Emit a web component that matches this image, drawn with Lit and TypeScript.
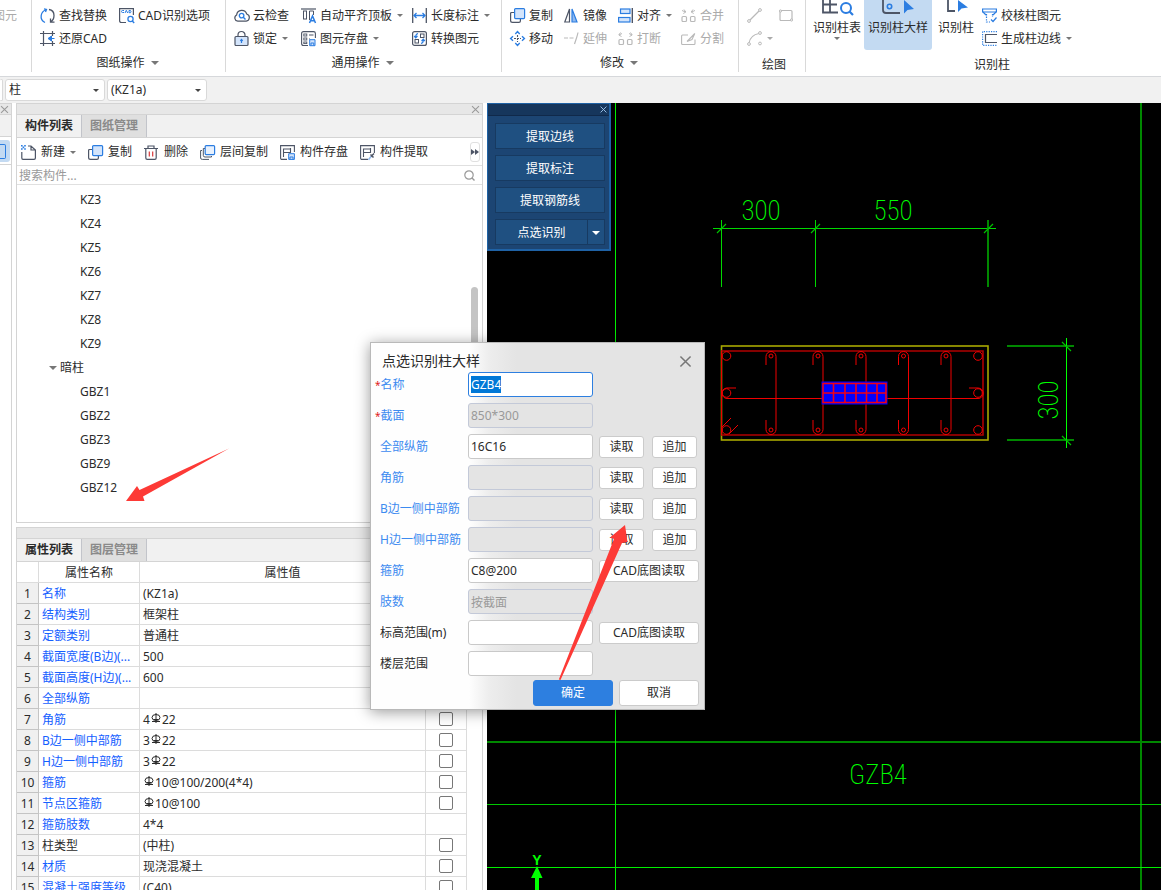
import { LitElement, html, svg, css, nothing, TemplateResult } from "lit";
import { customElement, state } from "lit/decorators.js";
import { classMap } from "lit/directives/class-map.js";

const D = "#4d5566"; // dark icon stroke
const B = "#2b7de1"; // accent stroke
const G = "#b9b9b9"; // disabled stroke
const L = "#d3e4fb"; // accent fill

const shapes: Record<string, TemplateResult> = {
  find: svg`<path d="M5 14.5C2 13 .8 10 1.2 7.500C1.600 5 3 3 5.500 2M4 .8L6.500 1.500L5.500 4" fill="none" stroke=${B} stroke-width="1.300"/><path d="M9 1.500C12 2 14 4.500 14 7.500C14 10 13 12.500 10.500 13.800M10.500 10.500V14.200H14.500" fill="none" stroke=${D} stroke-width="1.300"/>`,
  cadopt: svg`<path d="M7 14.500H2.500Q.6 14.500 .6 12.500V.6H14.400V7" fill="none" stroke=${D} stroke-width="1.200"/><path d="M5 2.500H3.500Q2.500 2.500 2.500 3.500T3.500 4.500H5M6 5L7.300 2.300L8.700 5M10 2.500V4.700H11.500Q12.500 3.600 11.500 2.500Z" fill="none" stroke=${B} stroke-width="1"/><circle cx="11.500" cy="11" r="2.600" fill="none" stroke=${B} stroke-width="1.300"/><path d="M13.300 13L15.200 15" stroke=${B} stroke-width="1.400"/>`,
  restore: svg`<path d="M3.500 0V15M0 2.500H15M0 12.500H15M12.500 0V5M12.500 10V15" fill="none" stroke=${D} stroke-width="1.200"/><path d="M14.500 7.500H9M11.500 5L8 7.500L11.500 10Z" fill=${B} stroke=${B} stroke-width="1"/>`,
  cloud: svg`<path d="M3.800 13.200A3.300 3.300 0 0 1 2.600 7A5.200 5.200 0 0 1 12.700 6A3.700 3.700 0 0 1 12.200 13.200Z" fill="none" stroke=${D} stroke-width="1.200"/><circle cx="7.600" cy="7.600" r="2.300" fill="none" stroke=${B} stroke-width="1.300"/><path d="M9.300 9.300L11.500 11.500" stroke=${B} stroke-width="1.400"/>`,
  lock: svg`<path d="M4 5.500V4A3.500 3.500 0 0 1 11 4V5.500" fill="none" stroke=${D} stroke-width="1.200"/><rect x="1" y="5.500" width="13" height="9" rx="1" fill=${L} stroke=${D} stroke-width="1.200"/><path d="M7.500 12V9.500M6.300 9.800L7.500 8.500L8.700 9.800" fill=${B} stroke=${B} stroke-width="1.200"/>`,
  aligntop: svg`<path d="M0 1H15" stroke=${D} stroke-width="1.200"/><rect x="2.500" y="3" width="3" height="8" fill="none" stroke=${D}/><path d="M8.500 12V3H12.500V7" fill="none" stroke=${D}/><path d="M8.500 15L11.500 8L14.500 15M9.500 12.700H13.500" fill="none" stroke=${B} stroke-width="1.500"/>`,
  save2: svg`<path d="M7 14.500H2.500Q.6 14.500 .6 12.500V2.500Q.6 .6 2.500 .6H12.500Q14.400 .6 14.400 2.500V7M8 4H12.500M8 8H9" fill="none" stroke=${D} stroke-width="1.100"/><rect x="2.800" y="3" width="3" height="2" fill="none" stroke=${D} stroke-width=".9"/><rect x="2.800" y="7" width="3" height="2" fill="none" stroke=${D} stroke-width=".9"/><rect x="2.800" y="11" width="3" height="1.600" fill="none" stroke=${D} stroke-width=".9"/><path d="M8.700 8.700H14V14.700H8.700ZM10 14.500V12H12.800V14.500" fill=${L} stroke=${B} stroke-width="1"/>`,
  length: svg`<path d="M.7 0V15M14.300 0V15" stroke=${D} stroke-width="1.300"/><path d="M2 7.500H13M4.500 5L2 7.500L4.500 10M10.500 5L13 7.500L10.500 10" fill="none" stroke=${B} stroke-width="1.300"/>`,
  convert: svg`<rect x=".6" y=".6" width="13.800" height="13.800" rx="2" fill="none" stroke=${D} stroke-width="1.200"/><rect x="8.500" y="3" width="3.500" height="3.500" fill="none" stroke=${D}/><rect x="3" y="8.500" width="3.500" height="3.500" fill="none" stroke=${D}/><path d="M6 2.500Q3.500 3 3.700 6.500M2.200 5L3.700 6.800L5.500 5M9 12.500Q11.500 12 11.300 8.500M9.500 10L11.300 8.200L12.800 10" fill="none" stroke=${B} stroke-width="1.200"/>`,
  copy: svg`<path d="M4 4.500H1.600Q.6 4.500 .6 5.500V12.500Q.6 14.400 2.500 14.400H9Q10.400 14.400 10.400 13V11" fill="none" stroke=${D} stroke-width="1.200"/><rect x="4.600" y=".6" width="10" height="10" rx="1" fill=${L} stroke=${B} stroke-width="1.200"/>`,
  mirror: svg`<path d="M5.500 1V14H.8Z" fill="none" stroke=${D} stroke-width="1.200"/><path d="M8 1L13 14H8Z" fill="#8fb9ef" stroke=${B} stroke-width="1.200"/>`,
  align: svg`<path d="M14.300 0V15" stroke=${D} stroke-width="1.400"/><rect x="2.500" y="1" width="9.500" height="4.500" fill=${L} stroke=${B} stroke-width="1.200"/><rect x=".6" y="9.500" width="11.400" height="4.500" fill=${L} stroke=${B} stroke-width="1.200"/>`,
  merge: svg`<path d="M1 2.500L4.500 4M3 1.500L4.800 4L2.300 5.500M14 2.500L10.500 4M12 1.500L10.200 4L12.700 5.500" fill="none" stroke=${G}/><rect x="1" y="8.500" width="4.500" height="5" rx="1" fill="none" stroke=${G} stroke-width="1.200"/><rect x="9.500" y="8.500" width="4.500" height="5" rx="1" fill="none" stroke=${G} stroke-width="1.200"/>`,
  move: svg`<path d="M7.500 4V11M4 7.500H11" stroke=${D} stroke-width="1.100" stroke-dasharray="2 1"/><path d="M5.300 3L7.500 .6L9.700 3M5.300 12L7.500 14.400L9.700 12M3 5.300L.6 7.500L3 9.700M12 5.300L14.400 7.500L12 9.700" fill="none" stroke=${B} stroke-width="1.400"/>`,
  extend: svg`<path d="M0 7H4M5.500 7H9.500M14 1.500Q13.500 4 12.500 7T10.500 13" fill="none" stroke=${G} stroke-width="1.200"/>`,
  brk: svg`<path d="M1 4L4 2.500M2.500 1.500L.8 4L3.500 5.500M14 4L11 2.500M12.500 1.500L14.200 4L11.500 5.500" fill="none" stroke=${G}/><rect x="1" y="8.500" width="4.500" height="5" rx="1" fill="none" stroke=${G} stroke-width="1.200"/><rect x="9.500" y="8.500" width="4.500" height="5" rx="1" fill="none" stroke=${G} stroke-width="1.200"/>`,
  split: svg`<path d="M7 4H1.500Q.6 4 .6 5V12.500Q.6 13.500 1.500 13.500H13Q14 13.500 14 12.500V8.500M6 10.500L13.800 2.500L11 8.500L6 10.500" fill="none" stroke=${G} stroke-width="1.100"/>`,
  line: svg`<circle cx="2" cy="13" r="1.400" fill="none" stroke=${G}/><circle cx="13" cy="2" r="1.400" fill="none" stroke=${G}/><path d="M3 12L12 3" stroke=${G} stroke-width="1.200"/>`,
  rect: svg`<rect x="2" y="2.500" width="12" height="10" rx="1" fill="none" stroke=${G} stroke-width="1.200"/><circle cx="2.500" cy="3" r="1.100" fill="#fff" stroke=${G}/><circle cx="13.500" cy="12" r="1.100" fill="#fff" stroke=${G}/>`,
  arc: svg`<path d="M2 12Q3.500 4 12 2.500" fill="none" stroke=${G} stroke-width="1.200"/><circle cx="2" cy="13" r="1.400" fill="#fff" stroke=${G}/><circle cx="13" cy="2" r="1.400" fill="#fff" stroke=${G}/><circle cx="13" cy="12.500" r="1.400" fill="#fff" stroke=${G}/>`,
  check: svg`<path d="M.6 1H14.400V4H.6Z" fill="none" stroke=${B} stroke-width="1.200"/><path d="M4.500 6V14H8M10.500 6V9" fill="none" stroke=${B} stroke-width="1.200" stroke-dasharray="1.400 1.200"/><path d="M1 4L4 7M14 4L11 7M9 11.500L11 13.500L14.500 9.500" fill="none" stroke=${B} stroke-width="1.200"/>`,
  border: svg`<path d="M15 .6H.6V14.400H15" fill="none" stroke=${B} stroke-width="1.200" stroke-dasharray="1.200 1.200"/><path d="M15 3.500H3.500V11.500H15" fill="none" stroke=${D} stroke-width="1.200"/>`,
  create: svg`<path d="M7 1H10L14.400 5V13Q14.400 14.400 13 14.400H2Q.8 14.400 .8 13V7M10 1V5H14.400" fill="none" stroke=${D} stroke-width="1.200"/><path d="M0 0H1.600V1.600H0ZM3.200 0H4.800V1.600H3.200ZM1.600 1.600H3.200V3.200H1.600ZM0 3.200H1.600V4.800H0ZM3.200 3.200H4.800V4.800H3.200Z" fill=${B}/>`,
  trash: svg`<path d="M0 3.500H14M4 3V1H10V3M1.800 4V13Q1.800 14.400 3.200 14.400H10.800Q12.200 14.400 12.200 13V4" fill="none" stroke=${D} stroke-width="1.200"/><path d="M5.300 6.500V11.500M8.700 6.500V11.500" stroke="#d8383a" stroke-width="1.200"/>`,
  floors: svg`<path d="M2 5.500H.6V13Q.6 14.400 2.500 14.400H9" fill="none" stroke=${D} stroke-width="1"/><path d="M5 3.500H3.300V10.500Q3.300 12 5 12H11.500V11" fill="none" stroke=${D} stroke-width="1"/><rect x="5.200" y=".6" width="9.400" height="9" rx="1" fill="#e8f1fd" stroke=${B} stroke-width="1.200"/>`,
  store: svg`<path d="M7 14.400H2Q.6 14.400 .6 13V.6H14.400V7M3.500 12V4H10.500M3.500 7.500H10.500V3" fill="none" stroke=${D} stroke-width="1.100"/><path d="M8.700 8.700H14.400V14.400H8.700ZM10 14.500V12H13V14.500" fill=${L} stroke=${B} stroke-width="1"/>`,
  extract: svg`<path d="M8 14.400H2Q.6 14.400 .6 13V.6H14.400V8M3.500 12V4H10.500M3.500 7.500H10.500V3" fill="none" stroke=${D} stroke-width="1.100"/><path d="M8.500 14.800L11 11.500" stroke="#8fb9ef" stroke-width="1.500"/><path d="M11 11.500L14 8.500M10.500 9.500L13.500 12.500" stroke=${D} stroke-width="1.500"/>`,
  cross: svg`<path d="M3.500 3.500L11.500 11.500M11.500 3.500L3.500 11.500" fill="none" stroke="currentColor" stroke-width="1.200"/>`,
  search: svg`<circle cx="7" cy="7" r="4.200" fill="none" stroke="#999" stroke-width="1.200"/><path d="M10 10L12.500 12.500" stroke="#999" stroke-width="1.400"/>`,
};

const icon = (name: string) =>
  html`<svg class="icon" width="15" height="15" viewBox="0 0 15 15" aria-hidden="true">${shapes[name]}</svg>`;
const caret = html`<span class="caret"></span>`;

interface Tool { icon: string; text?: string; menu?: boolean; off?: boolean; label?: string }

const drawingTools: Tool[] = [
  { icon: "find", text: "查找替换" },
  { icon: "cadopt", text: "CAD识别选项" },
  { icon: "restore", text: "还原CAD" },
];
const commonTools: Tool[] = [
  { icon: "cloud", text: "云检查" },
  { icon: "aligntop", text: "自动平齐顶板", menu: true },
  { icon: "length", text: "长度标注", menu: true },
  { icon: "lock", text: "锁定", menu: true },
  { icon: "save2", text: "图元存盘", menu: true },
  { icon: "convert", text: "转换图元" },
];
const modifyTools: Tool[] = [
  { icon: "copy", text: "复制" },
  { icon: "mirror", text: "镜像" },
  { icon: "align", text: "对齐", menu: true },
  { icon: "merge", text: "合并", off: true },
  { icon: "move", text: "移动" },
  { icon: "extend", text: "延伸", off: true },
  { icon: "brk", text: "打断", off: true },
  { icon: "split", text: "分割", off: true },
];
const drawTools: Tool[] = [
  { icon: "line", off: true, label: "直线" },
  { icon: "rect", off: true, label: "矩形" },
  { icon: "arc", off: true, menu: true, label: "弧" },
];
const listTools: Tool[] = [
  { icon: "create", text: "新建", menu: true },
  { icon: "copy", text: "复制" },
  { icon: "trash", text: "删除" },
  { icon: "floors", text: "层间复制" },
  { icon: "store", text: "构件存盘" },
  { icon: "extract", text: "构件提取" },
];

const properties: { name: string; value: string; plain?: boolean; tick?: boolean }[] = [
  { name: "名称", value: "(KZ1a)" },
  { name: "结构类别", value: "框架柱", tick: true },
  { name: "定额类别", value: "普通柱", tick: true },
  { name: "截面宽度(B边)(...", value: "500", tick: true },
  { name: "截面高度(H边)(...", value: "600", tick: true },
  { name: "全部纵筋", value: "", tick: true },
  { name: "角筋", value: "4#22", tick: true },
  { name: "B边一侧中部筋", value: "3#22", tick: true },
  { name: "H边一侧中部筋", value: "3#22", tick: true },
  { name: "箍筋", value: "#10@100/200(4*4)", tick: true },
  { name: "节点区箍筋", value: "#10@100", tick: true },
  { name: "箍筋肢数", value: "4*4" },
  { name: "柱类型", value: "(中柱)", plain: true, tick: true },
  { name: "材质", value: "现浇混凝土", tick: true },
  { name: "混凝土强度等级", value: "(C40)", tick: true },
];

const fields: { id: string; label: string; value?: string; need?: boolean; off?: boolean; plain?: boolean; act?: "pair" | "cad" }[] = [
  { id: "name", label: "名称", value: "GZB4", need: true },
  { id: "section", label: "截面", value: "850*300", need: true, off: true },
  { id: "all", label: "全部纵筋", value: "16C16", act: "pair" },
  { id: "corner", label: "角筋", off: true, act: "pair" },
  { id: "bside", label: "B边一侧中部筋", off: true, act: "pair" },
  { id: "hside", label: "H边一侧中部筋", off: true, act: "pair" },
  { id: "stirrup", label: "箍筋", value: "C8@200", act: "cad" },
  { id: "legs", label: "肢数", value: "按截面", off: true },
  { id: "level", label: "标高范围(m)", plain: true, act: "cad" },
  { id: "floor", label: "楼层范围", plain: true },
];

/** The model-space view: axis lines, the column section and its dimensions. */
@customElement("cad-view")
export class CadView extends LitElement {
  static styles = css`
    :host { display: block; background: #000; overflow: hidden; }
    .view { display: block; width: 100%; height: 100%; }
    .dim { font: 200 27px "Roboto Condensed", "Liberation Sans Narrow", "Liberation Sans", sans-serif; fill: #0f0; }
    .axis { font: 700 14px "Liberation Sans Narrow", "Liberation Sans", sans-serif; fill: #0f0; }
  `;

  private tie(x: number) {
    return svg`
      <path d="M${x - 10} 365V356.500A5 5 0 0 1 ${x} 356.500V429.500A5 5 0 0 1 ${x - 10} 429.500V420" />
      <circle cx=${x - 5} cy="356" r="2" /><circle cx=${x - 5} cy="430" r="2" />`;
  }

  render() {
    return html`<svg class="view" role="img" aria-label="GZB4">
      <g transform="translate(-487 -103)" fill="none">
        <path d="M487 742H3000M1141 103V2000" stroke="#008800" stroke-width="2" />
        <path d="M487 804.500H3000" stroke="#00c800" />
        <path d="M487 867.500H3000M615.500 103V2000" stroke="#00f000" />
        <path d="M713 228.500H996M721.500 220V287M815.500 220V287" stroke="#00d800" />
        <path d="M988 220V287M1007 346H1074M1007 440H1074" stroke="#008800" stroke-width="2" />
        <path d="M1066.500 338V448" stroke="#0f0" />
        <path d="M717 233L726 224M811 233L820 224M984 233L993 224M1062 342L1071 351M1062 436L1071 445" stroke="#00c000" stroke-width="1.200" />
        <text class="dim" x="761" y="220" text-anchor="middle">300</text>
        <text class="dim" x="893" y="220" text-anchor="middle">550</text>
        <text class="dim" transform="translate(1058 400) rotate(-90)" text-anchor="middle">300</text>
        <text class="dim" x="878" y="784" text-anchor="middle">GZB4</text>

        <rect x="721.500" y="346" width="266.500" height="94" stroke="#a8a800" stroke-width="1.600" />
        <path d="M721 351H983V435H721" stroke="#b00000" stroke-width="1.600" />
        <path d="M721.500 351V435M728 398.500H978" stroke="#f00000" />
        <g stroke="#f00000">
          ${[776, 823, 866, 908.5, 951].map((x) => this.tie(x))}
          ${[356, 393, 430].map((y) => svg`<circle cx="726.500" cy=${y} r="4.300" /><circle cx="978" cy=${y} r="4.300" />`)}
          <path d="M736 388H726.500A5 5 0 0 0 728 398.500M969 388H978A5 5 0 0 1 978 398.500M722 427L731 418M729 434L738 425" />
        </g>
        <rect x="821.500" y="381.500" width="66" height="23" fill="#00f" />
        <path d="M823 383.500H886V402.500H823ZM823 393H886M833.500 383V403M845 383V403M856 383V403M866.500 383V403M877 383V403" stroke="#f00014" stroke-width="1.600" />

        <text class="axis" x="537" y="865" text-anchor="middle">Y</text>
        <path d="M537 866L531 878H542.500ZM535 878H539V2000H535Z" fill="#0f0" />
      </g>
    </svg>`;
  }
}

@customElement("app-root")
export class AppRoot extends LitElement {
  @state() private values: Record<string, string> = Object.fromEntries(fields.map((f) => [f.id, f.value ?? ""]));

  static styles = css`
    :host {
      display: block; position: relative; height: 100vh; overflow: hidden;
      font: 12px/16px "Noto Sans", "Noto Sans CJK SC", sans-serif; color: #2b2b2b; background: #fff;
    }
    *, *::before { box-sizing: border-box; }
    button, input, select { font: inherit; color: inherit; margin: 0; padding: 0; border: 0; background: none; }
    button { display: inline-flex; align-items: center; white-space: nowrap; }
    .icon { flex: none; display: block; overflow: visible; }
    .caret { flex: none; width: 0; height: 0; border: 3px solid transparent; border-top-color: #777; border-bottom: 0; }
    .shell { display: flex; flex-direction: column; height: 100%; }

    .ribbon { display: flex; flex: none; height: 77px; padding-bottom: 4px; border-bottom: 1px solid #d6d8db; overflow: hidden; }
    .group { flex: none; display: flex; flex-direction: column; padding: 4px 0 0 8px; border-right: 1px solid #d9d9d9; }
    .group.drawing { width: 194px; }
    .group.common { width: 276px; }
    .group.modify { width: 237px; }
    .group.sketch { width: 67px; }
    .group.recognise { flex: 1 0 372px; padding: 0; border: 0; }
    .group.cut { width: 32px; padding: 4px 14px 0 0; align-items: flex-end; color: #aaa; }
    .tools { display: grid; grid-auto-rows: 23px; justify-content: start; }
    .drawing .tools { grid-template-columns: 79px auto; }
    .common .tools { grid-template-columns: 67px 111px auto; }
    .modify .tools { grid-template-columns: 54px 54px 63px auto; }
    .sketch .tools { grid-template-columns: 31px auto; }
    .tool { gap: 4px; }
    .tool .caret { margin-left: 1px; }
    .tool.off { color: #aaa; }
    .tool.off .caret { border-top-color: #aaa; }
    .caption { display: flex; align-items: center; justify-content: center; gap: 6px; height: 16px; margin: 5px 10px 0 0; }
    .caption .caret { border-width: 4px 4px 0; }
    .caption.low { margin: 7px 4px 0 0; }
    .recognise .caption.low { margin-right: 0; }
    .big-row { display: flex; height: 50px; padding-left: 4px; }
    .big { flex-direction: column; width: 54px; }
    .big.wide { width: 68px; background: #c3daf2; border-radius: 0 0 3px 3px; }
    .big .pic { display: block; height: 20px; }
    .big.narrow { width: 48px; }
    .big .caret { margin-top: 1px; }
    .side { display: flex; flex-direction: column; padding: 4px 0 0 2px; }
    .side .tool { height: 23px; }

    .options { flex: none; display: flex; gap: 2px; height: 26px; padding-top: 2px; background: #f1f1f1; }
    .combo { position: relative; display: flex; width: 100px; height: 22px; background: #fff; border: 1px solid #d9d9d9; border-radius: 3px; }
    .combo select { appearance: none; flex: 1; padding-left: 3px; outline: 0; }
    .combo .caret { position: absolute; right: 5px; top: 9px; pointer-events: none; border-top-color: #444; }
    .combo.stub { width: 3px; border-left: 0; }

    .main { flex: 1; min-height: 0; display: grid; grid-template-columns: 12px 467px 1fr; gap: 4px; }
    .rail { display: flex; flex-direction: column; border: 1px solid #d4d4d4; border-width: 1px 1px 0 0; }
    .rail .bar, .panel .bar { flex: none; height: 11px; display: flex; align-items: center; justify-content: flex-end; background: #e7e7e7; border-bottom: 1px solid #d4d4d4; color: #999; }
    .rail .bar .icon, .panel .bar .icon { width: 13px; height: 13px; }
    .rail .blank { height: 22px; background: #f1f1f1; border-bottom: 1px solid #d4d4d4; }
    .rail .holder { height: 28px; padding-top: 3px; border-bottom: 1px solid #d4d4d4; }
    .rail .mode { display: flex; align-items: center; width: 10px; height: 22px; background: #c3daf2; border-radius: 0 3px 3px 0; }
    .rail .mode::before { content: ""; width: 6px; height: 15px; border: 1px solid #2b7de1; border-left: 0; border-radius: 0 2px 2px 0; }

    .column { display: flex; flex-direction: column; gap: 4px; min-height: 0; }
    .panel { display: flex; flex-direction: column; border: 1px solid #d4d4d4; min-height: 0; }
    .panel.list { flex: 0 0 420px; }
    .panel.props { flex: 1; border-bottom: 0; overflow: hidden; }
    .tabs { flex: none; display: flex; height: 23px; background: #f1f1f1; border-bottom: 1px solid #d4d4d4; }
    .tab { width: 65px; justify-content: center; font-weight: 700; border-right: 1px solid #c2c4ca; }
    .tab.idle { background: #dfdfdf; color: #8a8a8a; }
    .actions { flex: none; display: flex; align-items: center; gap: 12px; height: 28px; padding: 1px 2px 0 4px; border-bottom: 1px solid #e0e0e0; }
    .actions .tool { gap: 5px; }
    .actions .tool .caret { margin-left: 0; }
    .actions .more { width: 10px; height: 20px; margin-left: auto; justify-content: center; border: 1px solid #e0e0e0; border-radius: 3px; }
    .more .next { flex: none; width: 0; height: 0; border: 3px solid transparent; border-left: 4px solid #4d5566; border-right: 0; }
    .find { flex: none; display: flex; align-items: center; height: 19px; padding: 1px 5px 0 2px; border-bottom: 1px solid #e0e0e0; }
    .find input { flex: 1; min-width: 0; outline: 0; }
    .find input::placeholder { color: #999; opacity: 1; }
    .tree { position: relative; flex: 1; margin: 0; padding: 3px 0 0; list-style: none; overflow: hidden; }
    .tree li { display: flex; align-items: center; height: 24px; padding-left: 63px; }
    .tree li.branch { gap: 3px; padding-left: 32px; }
    .tree .caret { border-width: 4px 4px 0; }
    .tree .thumb { position: absolute; right: 4px; top: 102px; width: 7px; height: 200px; padding: 0; border-radius: 4px; background: #c4c4c4; }

    .grid { width: 450px; border-collapse: separate; border-spacing: 0; table-layout: fixed; }
    .grid th, .grid td { height: 21px; padding: 1px 3px 0; border: 1px solid #dcdcdc; border-width: 0 1px 1px 0; font-weight: 400; text-align: left; white-space: nowrap; overflow: hidden; }
    .grid thead th { text-align: center; }
    .grid tbody th { background: #f0f0f0; border-color: #c4c4c4; text-align: center; padding: 1px 0 0; }
    .grid .label { color: #1560ff; }
    .grid .label.plain { color: #2b2b2b; }
    .grid .tick { padding: 0; text-align: center; }
    .grid .no { width: 22px; }
    .grid .name { width: 101px; }
    .grid .flag { width: 41px; }
    .tick input { appearance: none; display: block; width: 14px; height: 14px; margin: 0 auto; border: 1px solid #777; border-radius: 2px; background: #fff; }
    .rebar { display: inline-block; margin: 0 1px; vertical-align: 1px; }

    .stage { position: relative; display: flex; min-width: 0; }
    cad-view { flex: 1; min-width: 0; }
    .palette { position: absolute; left: 0; top: 0; width: 124px; padding-bottom: 4px; background: #1c4573; border: 1px solid #1f62a5; border-width: 1px 2px 2px 1px; color: #fff; }
    .palette .head { display: flex; justify-content: flex-end; align-items: flex-end; height: 12px; background: #16365c; border-bottom: 1px solid #10294a; color: #a5cdf5; }
    .palette .head .icon { width: 11px; height: 11px; }
    .palette .body { display: flex; flex-direction: column; gap: 6px; padding: 7px 4px 0 7px; }
    .palette .cmd { height: 26px; padding-top: 1px; justify-content: center; background: #1f5081; border: 1px solid #173a61; }
    .palette .split { display: flex; }
    .palette .split .cmd { flex: 1; }
    .palette .split .drop { flex: 0 0 17px; border-left: 0; }
    .palette .caret { border-width: 4px 4px 0; border-top-color: #fff; }

    .dialog {
      position: absolute; left: 370px; top: 342px; width: 335px; padding: 9px 5px 3px 9px;
      background: linear-gradient(90deg, #fefefe 98px, #ededed 118px, #e4e4e4 145px);
      border: 1px solid #b9b9b9; box-shadow: 0 2px 14px rgba(0, 0, 0, .4);
    }
    .title { display: flex; justify-content: space-between; align-items: center; height: 18px; padding: 0 4px 0 2px; font-size: 14px; }
    .title h2 { margin: 0; font: inherit; }
    .title .icon { width: 19px; height: 19px; color: #777; }
    .form { display: grid; grid-template-columns: 82px 125px 1fr; grid-auto-rows: 25px; column-gap: 6px; row-gap: 6px; margin-top: 2px; }
    .form label { align-self: center; white-space: nowrap; color: #3d8bf0; }
    .form label.need { margin-left: -5px; }
    .form label.need::before { content: "*"; color: #e02020; font-size: 10px; }
    .form label.plain { color: #2b2b2b; }
    .form input { width: 100%; height: 25px; padding: 0 2px; background: #fff; border: 1px solid #c9c9c9; border-radius: 3px; outline: 0; }
    .form input.active { border-color: #2d7fe0; }
    .form input:disabled { background: #e4e4e4; border-color: #c3c9d8; color: #999; }
    .form input::selection { background: #0078d7; color: #fff; }
    .acts { display: flex; align-items: center; gap: 8px; }
    .push { height: 22px; width: 45px; justify-content: center; background: #fff; border: 1px solid #cbcbcb; border-radius: 3px; }
    .push.long { width: 100px; }
    .foot { display: flex; justify-content: flex-end; gap: 6px; margin-top: 4px; }
    .foot .push { width: 80px; height: 26px; }
    .foot .push.ok { background: #2d7fe0; border-color: #2d7fe0; color: #fff; }
    .marks { position: absolute; left: 0; top: 0; width: 100%; height: 100%; pointer-events: none; }
  `;

  firstUpdated() {
    const box = this.renderRoot.querySelector<HTMLInputElement>("#name");
    box?.focus({ preventScroll: true });
    box?.select();
  }

  private tool(t: Tool) {
    return html`<button type="button" class=${classMap({ tool: true, off: !!t.off })} ?disabled=${!!t.off} aria-label=${t.text ?? t.label ?? nothing}>
      ${icon(t.icon)}${t.text ? html`<span>${t.text}</span>` : nothing}${t.menu ? caret : nothing}
    </button>`;
  }

  private group(kind: string, title: string, tools: Tool[], menu = true) {
    return html`<div class="group ${kind}">
      <div class="tools">${tools.map((t) => this.tool(t))}</div>
      <div class=${classMap({ caption: true, low: !menu })}>${title}${menu ? caret : nothing}</div>
    </div>`;
  }

  private value(text: string) {
    if (!text.includes("#")) return text;
    const [before, after] = text.split("#");
    return html`${before}<svg class="rebar" width="10" height="10" viewBox="0 0 10 10" role="img" aria-label="HRB400">
      <path d="M5 0V10M1 8.500H9M2.500 6.500H7.500" fill="none" stroke="#2b2b2b" /><ellipse cx="5" cy="4.500" rx="4" ry="3" fill="none" stroke="#2b2b2b" />
    </svg>${after}`;
  }

  private ribbon() {
    return html`<div class="ribbon">
      <div class="group cut"><div class="tools"><button type="button" class="tool off" disabled>图元</button></div></div>
      ${this.group("drawing", "图纸操作", drawingTools)}
      ${this.group("common", "通用操作", commonTools)}
      ${this.group("modify", "修改", modifyTools)}
      ${this.group("sketch", "绘图", drawTools, false)}
      <div class="group recognise">
        <div class="big-row">
          <button type="button" class="big">
            <svg class="pic" width="34" height="20" aria-hidden="true"><path d="M3 0V12.500H18M3 4.500H17M10 0V12.500" fill="none" stroke=${D} stroke-width="1.800"/><circle cx="26" cy="8" r="5" fill="none" stroke=${B} stroke-width="2"/><path d="M29.500 11.500L33 15" stroke=${B} stroke-width="2.200"/></svg>
            <span>识别柱表</span>${caret}
          </button>
          <button type="button" class="big wide">
            <svg class="pic" width="34" height="20" aria-hidden="true"><path d="M2 0V10Q2 13 5 13H19" fill="none" stroke=${D} stroke-width="1.800"/><circle cx="8.500" cy="6.500" r="2.200" fill="none" stroke=${B} stroke-width="1.600"/><path d="M23 0V13.500L26.500 10L33 9Z" fill=${B}/></svg>
            <span>识别柱大样</span>
          </button>
          <button type="button" class="big narrow">
            <svg class="pic" width="26" height="20" aria-hidden="true"><path d="M5 0V11H12" fill="none" stroke=${D} stroke-width="1.800"/><path d="M15 0V12L18.500 8.500L25 7.500Z" fill=${B}/></svg>
            <span>识别柱</span>
          </button>
          <div class="side">
            ${this.tool({ icon: "check", text: "校核柱图元" })}
            ${this.tool({ icon: "border", text: "生成柱边线", menu: true })}
          </div>
        </div>
        <div class="caption low">识别柱</div>
      </div>
    </div>`;
  }

  private listPanel() {
    const leaf = (t: string) => html`<li>${t}</li>`;
    return html`<section class="panel list">
      <div class="bar">${icon("cross")}</div>
      <div class="tabs"><button type="button" class="tab">构件列表</button><button type="button" class="tab idle">图纸管理</button></div>
      <div class="actions">
        ${listTools.map((t) => this.tool(t))}
        <button type="button" class="more" aria-label="更多"><span class="next"></span><span class="next"></span></button>
      </div>
      <div class="find"><input type="text" placeholder="搜索构件..." aria-label="搜索构件" />${icon("search")}</div>
      <ul class="tree">
        ${["KZ3", "KZ4", "KZ5", "KZ6", "KZ7", "KZ8", "KZ9"].map(leaf)}
        <li class="branch">${caret}暗柱</li>
        ${["GBZ1", "GBZ2", "GBZ3", "GBZ9", "GBZ12"].map(leaf)}
        <li class="thumb" role="presentation"></li>
      </ul>
    </section>`;
  }

  private propsPanel() {
    return html`<section class="panel props">
      <div class="bar"></div>
      <div class="tabs"><button type="button" class="tab">属性列表</button><button type="button" class="tab idle">图层管理</button></div>
      <table class="grid">
        <thead><tr><th class="no"></th><th class="name">属性名称</th><th>属性值</th><th class="flag"></th></tr></thead>
        <tbody>
          ${properties.map((p, i) => html`<tr>
            <th scope="row">${i + 1}</th>
            <td class=${classMap({ label: true, plain: !!p.plain })}>${p.name}</td>
            <td>${this.value(p.value)}</td>
            <td class="tick">${p.tick ? html`<input type="checkbox" aria-label=${p.name} />` : nothing}</td>
          </tr>`)}
        </tbody>
      </table>
    </section>`;
  }

  private dialog() {
    return html`<form class="dialog" role="dialog" aria-labelledby="dialog-title" @submit=${(e: Event) => e.preventDefault()}>
      <div class="title"><h2 id="dialog-title">点选识别柱大样</h2><button type="button" aria-label="关闭">${icon("cross")}</button></div>
      <div class="form">
        ${fields.map((f) => html`
          <label for=${f.id} class=${classMap({ need: !!f.need, plain: !!f.plain })}>${f.label}</label>
          <input id=${f.id} type="text" class=${classMap({ active: f.id === "name" })} .value=${this.values[f.id]} ?disabled=${!!f.off}
            @input=${(e: Event) => (this.values = { ...this.values, [f.id]: (e.target as HTMLInputElement).value })} />
          <div class="acts">
            ${f.act === "pair" ? html`<button type="button" class="push">读取</button><button type="button" class="push">追加</button>` : nothing}
            ${f.act === "cad" ? html`<button type="button" class="push long">CAD底图读取</button>` : nothing}
          </div>`)}
      </div>
      <div class="foot"><button type="submit" class="push ok">确定</button><button type="button" class="push">取消</button></div>
    </form>`;
  }

  render() {
    return html`
      <div class="shell">
        ${this.ribbon()}
        <div class="options">
          <div class="combo stub"></div>
          <div class="combo"><select aria-label="构件类型"><option>柱</option></select>${caret}</div>
          <div class="combo"><select aria-label="构件名称"><option>(KZ1a)</option></select>${caret}</div>
        </div>
        <div class="main">
          <div class="rail"><div class="bar">${icon("cross")}</div><div class="blank"></div><div class="holder"><div class="mode"></div></div></div>
          <div class="column">${this.listPanel()}${this.propsPanel()}</div>
          <div class="stage">
            <cad-view></cad-view>
            <div class="palette">
              <div class="head">${icon("cross")}</div>
              <div class="body">
                <button type="button" class="cmd">提取边线</button>
                <button type="button" class="cmd">提取标注</button>
                <button type="button" class="cmd">提取钢筋线</button>
                <div class="split"><button type="button" class="cmd">点选识别</button><button type="button" class="cmd drop" aria-label="更多识别">${caret}</button></div>
              </div>
            </div>
          </div>
        </div>
      </div>
      ${this.dialog()}
      <svg class="marks" aria-hidden="true">
        <path d="M126 501L137 486L139.500 490L229 448.500L143 496.500L144.500 501Z" fill="#fd3a36" />
        <path d="M625 525L610 537.500L614 539L558.800 679.500L560.500 680L622 543L627.500 542Z" fill="#fd3a36" />
      </svg>`;
  }
}
